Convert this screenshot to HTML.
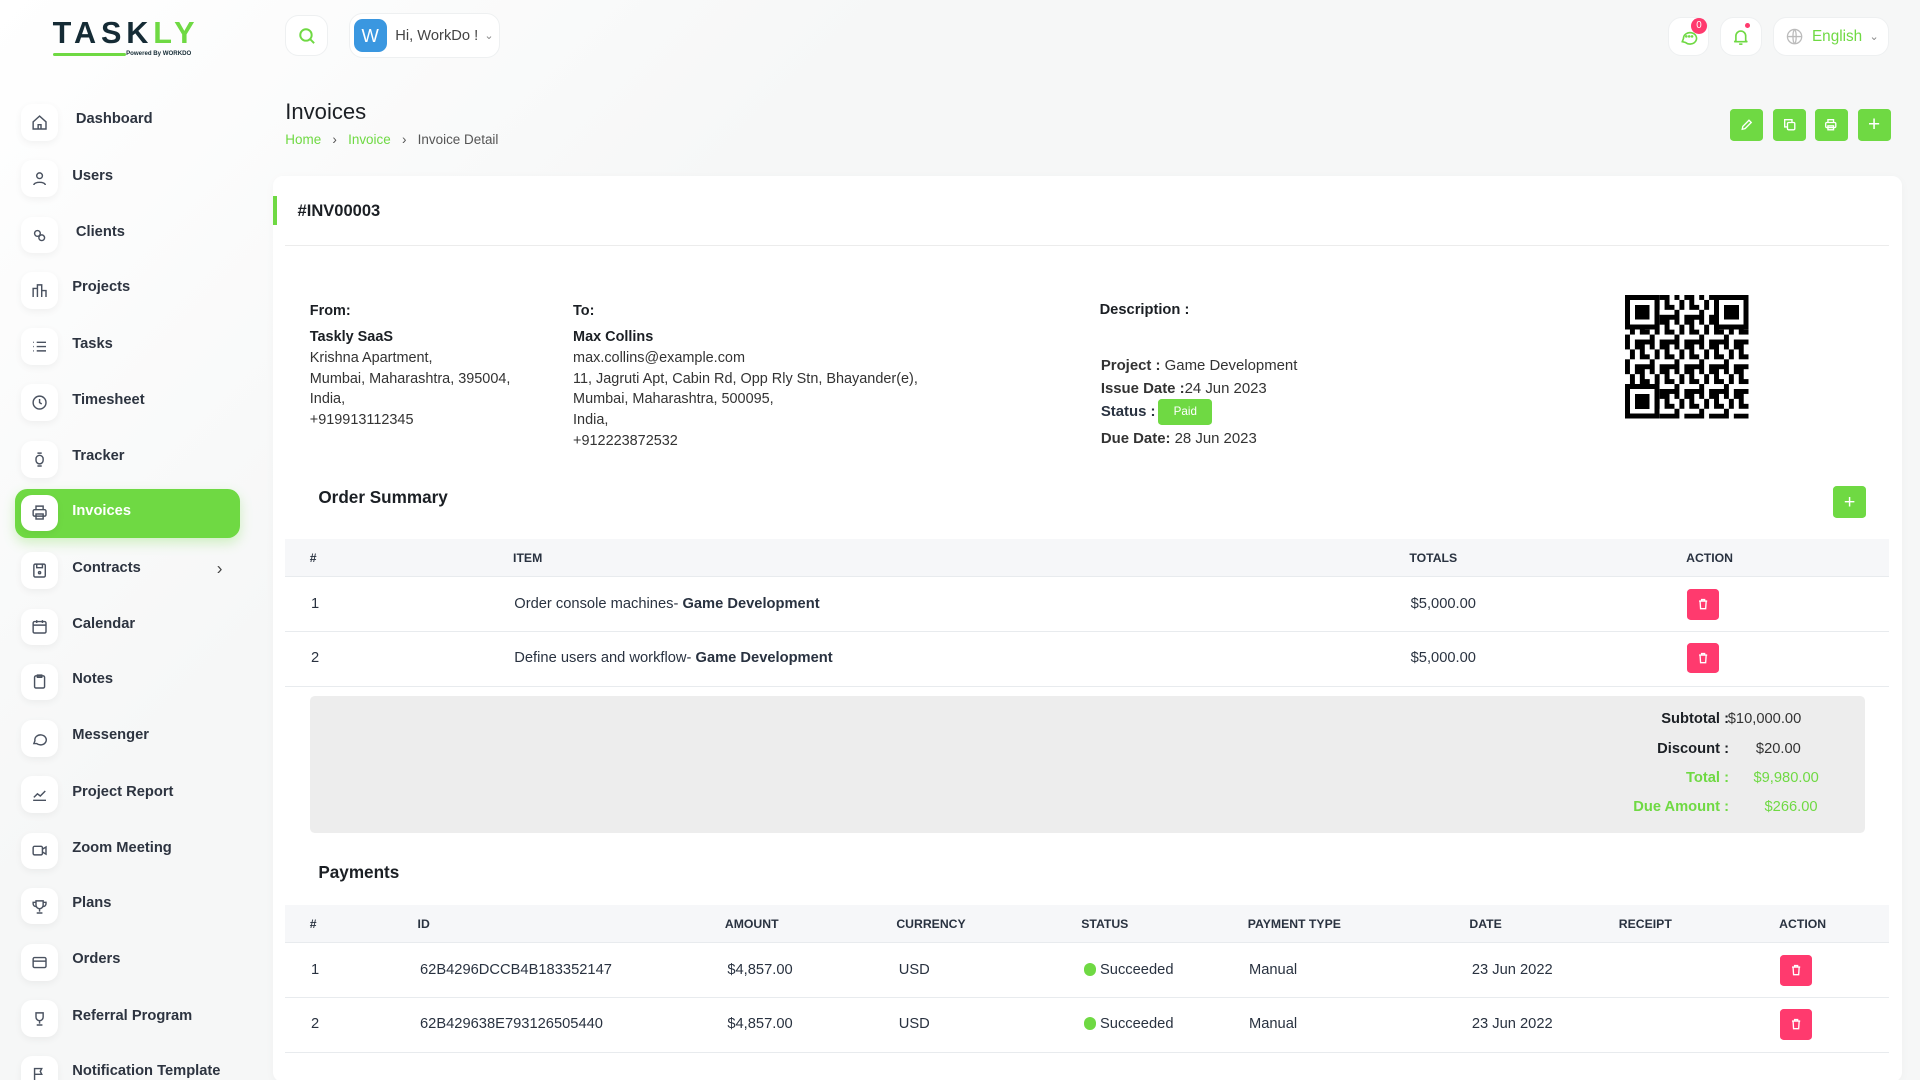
<!DOCTYPE html>
<html><head><meta charset="utf-8">
<style>
*{box-sizing:border-box;margin:0;padding:0}
html,body{width:1920px;height:1080px;overflow:hidden;background:#f7f8f8}
#w{zoom:1.22449;width:1568px;height:882px;position:relative;font-family:"Liberation Sans",sans-serif;color:#293240;font-size:12px;background:linear-gradient(135deg,#fff 0%,#f6f7f7 30%,#f6f7f7 100%)}
.a{position:absolute;white-space:nowrap}
.ib{position:absolute;left:17px;width:30px;height:30px;background:#fff;border-radius:9px;box-shadow:0 2px 6px rgba(0,0,0,.05);display:flex;align-items:center;justify-content:center}
.nt{position:absolute;left:59px;font-size:12px;font-weight:bold;color:#2d3440;white-space:nowrap}
.hb{position:absolute;background:#fff;border-radius:11px;border:1px solid #eef0f1;display:flex;align-items:center;justify-content:center;white-space:nowrap}
.gb{position:absolute;width:27px;height:26px;background:#6fd943;border-radius:3px;display:flex;align-items:center;justify-content:center}
.th{position:absolute;font-size:10px;font-weight:bold;color:#293240}
.rb{position:absolute;width:26px;height:25px;background:#ff3a6e;border-radius:3px;display:flex;align-items:center;justify-content:center}
.row{position:absolute;left:233px;width:1310px;border-bottom:1px solid #e8ebee}
.ib svg{width:14px;height:14px}
</style></head><body><div id="w">
<div class="a" style="left:43px;top:13px;font-size:25px;font-weight:900;letter-spacing:4px;color:#152b35">TASK<span style="color:#6fd943">LY</span></div>
<div class="a" style="left:43px;top:43px;width:60px;height:3px;background:#6fd943;border-radius:2px"></div>
<div class="a" style="left:103px;top:41px;font-size:5px;font-weight:bold;color:#152b35">Powered By WORKDO</div>

<div class="hb" style="left:233px;top:12px;width:35px;height:34px"><svg width="16" height="16" viewBox="0 0 24 24" fill="none" stroke="#6fd943" stroke-width="2.4"><circle cx="11" cy="11" r="7"/><path d="M16 16l5 5"/></svg></div>
<div class="hb" style="left:285px;top:11px;width:123px;height:36px;justify-content:flex-start;padding-left:3px"><div style="width:27px;height:27px;background:#3a97e0;border-radius:7px;color:#fff;font-size:15px;display:flex;align-items:center;justify-content:center">W</div><span style="margin-left:7px;font-size:12px;color:#444">Hi, WorkDo !</span><span style="margin-left:5px;color:#888;font-size:9px">&#8964;</span></div>
<div class="hb" style="left:1362px;top:14px;width:34px;height:32px"><svg width="16" height="16" viewBox="0 0 24 24" fill="none" stroke="#6fd943" stroke-width="2"><path d="M4 18l1.5-4A8 7 0 1 1 8 19z"/><circle cx="9" cy="11.5" r=".6" fill="#6fd943"/><circle cx="12.5" cy="11.5" r=".6" fill="#6fd943"/><circle cx="16" cy="11.5" r=".6" fill="#6fd943"/></svg></div>
<div class="a" style="left:1381px;top:15px;width:13px;height:13px;border-radius:50%;background:#ff3a6e;color:#fff;font-size:8px;text-align:center;line-height:13px">0</div>
<div class="hb" style="left:1405px;top:14px;width:34px;height:32px"><svg width="16" height="16" viewBox="0 0 24 24" fill="none" stroke="#6fd943" stroke-width="2"><path d="M6 17V11a6 6 0 0 1 12 0v6l2 1H4z"/><path d="M10 21h4"/></svg></div>
<div class="a" style="left:1425px;top:19px;width:4px;height:4px;border-radius:50%;background:#ff3a6e"></div>
<div class="hb" style="left:1448px;top:14px;width:95px;height:32px;justify-content:flex-start;padding-left:10px"><svg width="14" height="14" viewBox="0 0 24 24" fill="none" stroke="#bbb" stroke-width="1.8"><circle cx="12" cy="12" r="10"/><path d="M2 12h20M12 2c3 3 3 17 0 20M12 2c-3 3-3 17 0 20"/></svg><span style="margin-left:7px;color:#6fd943;font-size:12.5px">English</span><span style="margin-left:6px;color:#888;font-size:9px">&#8964;</span></div>

<div class="a" style="left:12px;top:399px;width:184px;height:40px;background:#6fd943;border-radius:10px;box-shadow:0 4px 10px rgba(111,217,67,.3)"></div>
<div class="ib" style="top:85px"><svg viewBox="0 0 24 24" fill="none" stroke="#4a5260" stroke-width="2"><path d="M3 11l9-8 9 8v10H3z"/><path d="M10 21v-6h4v6"/></svg></div><div class="nt" style="left:62px;top:91px">Dashboard</div>
<div class="ib" style="top:131px"><svg viewBox="0 0 24 24" fill="none" stroke="#4a5260" stroke-width="2"><circle cx="12" cy="8" r="4"/><path d="M4 21c0-5 16-5 16 0"/></svg></div><div class="nt" style="top:137px">Users</div>
<div class="ib" style="top:177px"><svg viewBox="0 0 24 24" fill="none" stroke="#4a5260" stroke-width="2"><circle cx="9" cy="9" r="4"/><circle cx="15" cy="15" r="4"/></svg></div><div class="nt" style="left:62px;top:183px">Clients</div>
<div class="ib" style="top:222px"><svg viewBox="0 0 24 24" fill="none" stroke="#4a5260" stroke-width="2"><path d="M3 21V9h6v12M9 21V4h6v17M15 21V12h6v9"/></svg></div><div class="nt" style="top:228px">Projects</div>
<div class="ib" style="top:268px"><svg viewBox="0 0 24 24" fill="none" stroke="#4a5260" stroke-width="2"><path d="M8 6h13M8 12h13M8 18h13M3 6h1M3 12h1M3 18h1"/></svg></div><div class="nt" style="top:274px">Tasks</div>
<div class="ib" style="top:314px"><svg viewBox="0 0 24 24" fill="none" stroke="#4a5260" stroke-width="2"><circle cx="12" cy="12" r="9"/><path d="M12 7v5l3 2"/></svg></div><div class="nt" style="top:320px">Timesheet</div>
<div class="ib" style="top:360px"><svg viewBox="0 0 24 24" fill="none" stroke="#4a5260" stroke-width="2"><rect x="7" y="6" width="10" height="12" rx="5"/><path d="M9 3h6M9 21h6"/></svg></div><div class="nt" style="top:366px">Tracker</div>
<div class="ib" style="top:404px"><svg viewBox="0 0 24 24" fill="none" stroke="#4a5260" stroke-width="2"><path d="M7 8V3h10v5"/><rect x="3" y="8" width="18" height="9" rx="2"/><rect x="7" y="14" width="10" height="7"/></svg></div><div class="nt" style="top:411px;color:#fff">Invoices</div>
<div class="ib" style="top:451px"><svg viewBox="0 0 24 24" fill="none" stroke="#4a5260" stroke-width="2"><rect x="4" y="3" width="16" height="18" rx="2"/><path d="M8 3v5h8V3"/><circle cx="12" cy="15" r="1.5"/></svg></div><div class="nt" style="top:457px">Contracts</div><div class="a" style="left:177px;top:456px;font-size:14px;color:#444">&#8250;</div>
<div class="ib" style="top:497px"><svg viewBox="0 0 24 24" fill="none" stroke="#4a5260" stroke-width="2"><rect x="3" y="5" width="18" height="16" rx="2"/><path d="M3 10h18M8 3v4M16 3v4"/></svg></div><div class="nt" style="top:503px">Calendar</div>
<div class="ib" style="top:542px"><svg viewBox="0 0 24 24" fill="none" stroke="#4a5260" stroke-width="2"><rect x="5" y="4" width="14" height="17" rx="2"/><path d="M9 3h6v3H9z"/></svg></div><div class="nt" style="top:548px">Notes</div>
<div class="ib" style="top:588px"><svg viewBox="0 0 24 24" fill="none" stroke="#4a5260" stroke-width="2"><path d="M4 19l1.5-4A8 7 0 1 1 8 19z"/></svg></div><div class="nt" style="top:594px">Messenger</div>
<div class="ib" style="top:634px"><svg viewBox="0 0 24 24" fill="none" stroke="#4a5260" stroke-width="2"><path d="M3 20h18M4 16l5-5 4 3 7-7"/></svg></div><div class="nt" style="top:640px">Project Report</div>
<div class="ib" style="top:680px"><svg viewBox="0 0 24 24" fill="none" stroke="#4a5260" stroke-width="2"><rect x="3" y="6" width="13" height="12" rx="2"/><path d="M16 10l5-3v10l-5-3"/></svg></div><div class="nt" style="top:686px">Zoom Meeting</div>
<div class="ib" style="top:725px"><svg viewBox="0 0 24 24" fill="none" stroke="#4a5260" stroke-width="2"><path d="M7 4h10v6a5 5 0 0 1-10 0zM12 15v4M8 21h8M7 6H3v2a4 4 0 0 0 4 4M17 6h4v2a4 4 0 0 1-4 4"/></svg></div><div class="nt" style="top:731px">Plans</div>
<div class="ib" style="top:771px"><svg viewBox="0 0 24 24" fill="none" stroke="#4a5260" stroke-width="2"><rect x="3" y="5" width="18" height="14" rx="2"/><path d="M3 10h18"/></svg></div><div class="nt" style="top:777px">Orders</div>
<div class="ib" style="top:817px"><svg viewBox="0 0 24 24" fill="none" stroke="#4a5260" stroke-width="2"><path d="M7 4h10v6a5 5 0 0 1-10 0zM12 15v4M8 21h8"/></svg></div><div class="nt" style="top:823px">Referral Program</div>
<div class="ib" style="top:862px"><svg viewBox="0 0 24 24" fill="none" stroke="#4a5260" stroke-width="2"><path d="M5 21V5h10l-2 4 2 4H5"/></svg></div><div class="nt" style="top:868px">Notification Template</div>

<div class="a" style="left:233px;top:81px;font-size:18px;color:#1b1f24">Invoices</div>
<div class="a" style="left:233px;top:108px;font-size:11px;color:#555"><span style="color:#6fd943">Home</span>&nbsp;&nbsp;&nbsp;›&nbsp;&nbsp;&nbsp;<span style="color:#6fd943">Invoice</span>&nbsp;&nbsp;&nbsp;›&nbsp;&nbsp;&nbsp;Invoice Detail</div>
<div class="gb" style="left:1413px;top:89px"><svg width="11" height="11" viewBox="0 0 24 24" fill="none" stroke="#fff" stroke-width="2.4"><path d="M4 20l1-5L16 4l4 4L9 19z"/></svg></div>
<div class="gb" style="left:1448px;top:89px"><svg width="11" height="11" viewBox="0 0 24 24" fill="none" stroke="#fff" stroke-width="2.4"><rect x="8" y="8" width="13" height="13" rx="2"/><path d="M16 8V3H3v13h5"/></svg></div>
<div class="gb" style="left:1482px;top:89px"><svg width="11" height="11" viewBox="0 0 24 24" fill="none" stroke="#fff" stroke-width="2.4"><path d="M7 8V3h10v5"/><rect x="3" y="8" width="18" height="9" rx="2"/><rect x="7" y="14" width="10" height="7"/></svg></div>
<div class="gb" style="left:1517px;top:89px;color:#fff;font-size:17px">+</div>

<div class="a" style="left:223px;top:144px;width:1330px;height:740px;background:#fff;border-radius:8px;box-shadow:0 2px 8px rgba(0,0,0,.03)"></div>
<div class="a" style="left:223px;top:160px;width:3px;height:24px;background:#6fd943"></div>
<div class="a" style="left:243px;top:164px;font-size:13.5px;font-weight:bold;color:#1b1f24">#INV00003</div>
<div class="a" style="left:233px;top:200px;width:1310px;height:1px;background:#ececec"></div>

<div class="a" style="left:253px;top:246px;line-height:17px;font-size:11.8px;color:#333"><b style="color:#1b1f24">From:</b><br><div style="height:4px"></div><b style="color:#1b1f24">Taskly SaaS</b><br>Krishna Apartment,<br>Mumbai, Maharashtra, 395004,<br>India,<br>+919913112345</div>
<div class="a" style="left:468px;top:246px;line-height:17px;font-size:11.8px;color:#333"><b style="color:#1b1f24">To:</b><br><div style="height:4px"></div><b style="color:#1b1f24">Max Collins</b><br>max.collins@example.com<br>11, Jagruti Apt, Cabin Rd, Opp Rly Stn, Bhayander(e),<br>Mumbai, Maharashtra, 500095,<br>India,<br>+912223872532</div>
<div class="a" style="left:898px;top:247px;font-size:12px;font-weight:bold;color:#1b1f24">Description :</div>
<div class="a" style="left:899px;top:289px;font-size:12.2px;color:#333;line-height:19px"><b>Project :</b> Game Development<br><b>Issue Date :</b>24 Jun 2023</div>
<div class="a" style="left:899px;top:329px;font-size:12.2px;font-weight:bold">Status :</div>
<div class="a" style="left:946px;top:326px;width:44px;height:21px;background:#6fd943;border-radius:3px;color:#fff;font-size:9.5px;text-align:center;line-height:21px">Paid</div>
<div class="a" style="left:899px;top:351px;font-size:12.2px;color:#333"><b>Due Date:</b> 28 Jun 2023</div>
<svg class="a" style="left:1327px;top:241px" width="101" height="101" viewBox="0 0 25 25" shape-rendering="crispEdges">
<rect width="25" height="25" fill="#fff"/>
<pattern id="q" width="5" height="5" patternUnits="userSpaceOnUse"><rect x="0" y="0" width="1" height="1"/><rect x="2" y="0" width="2" height="1"/><rect x="1" y="1" width="1" height="2"/><rect x="3" y="2" width="2" height="1"/><rect x="0" y="3" width="1" height="2"/><rect x="2" y="4" width="2" height="1"/><rect x="4" y="4" width="1" height="1"/><rect x="3" y="1" width="1" height="1"/></pattern>
<rect width="25" height="25" fill="url(#q)"/>
<g><rect x="0" y="0" width="7" height="7" fill="#fff"/><rect x=".5" y=".5" width="6" height="6" fill="none" stroke="#000"/><rect x="2" y="2" width="3" height="3"/>
<rect x="18" y="0" width="7" height="7" fill="#fff"/><rect x="18.5" y=".5" width="6" height="6" fill="none" stroke="#000"/><rect x="20" y="2" width="3" height="3"/>
<rect x="0" y="18" width="7" height="7" fill="#fff"/><rect x=".5" y="18.5" width="6" height="6" fill="none" stroke="#000"/><rect x="2" y="20" width="3" height="3"/></g></svg>

<div class="a" style="left:260px;top:398px;font-size:14px;font-weight:bold;color:#1b1f24">Order Summary</div>
<div class="gb" style="left:1497px;top:397px;color:#fff;font-size:16px">+</div>
<div class="row" style="top:440px;height:31px;background:#f6f7f9"></div>
<div class="th" style="left:253px;top:450px">#</div><div class="th" style="left:419px;top:450px">ITEM</div><div class="th" style="left:1151px;top:450px">TOTALS</div><div class="th" style="left:1377px;top:450px">ACTION</div>
<div class="row" style="top:471px;height:45px"></div>
<div class="row" style="top:516px;height:45px"></div>
<div class="a" style="left:254px;top:487px;font-size:12px">1</div><div class="a" style="left:420px;top:487px;font-size:12px">Order console machines- <b>Game Development</b></div><div class="a" style="left:1152px;top:487px;font-size:12px">$5,000.00</div>
<div class="a" style="left:254px;top:531px;font-size:12px">2</div><div class="a" style="left:420px;top:531px;font-size:12px">Define users and workflow- <b>Game Development</b></div><div class="a" style="left:1152px;top:531px;font-size:12px">$5,000.00</div>
<div class="rb" style="left:1378px;top:481px"><svg width="10" height="10" viewBox="0 0 24 24" fill="none" stroke="#fff" stroke-width="2.6"><path d="M4 6h16M9 6V3h6v3M6 6l1 15h10l1-15"/></svg></div>
<div class="rb" style="left:1378px;top:525px"><svg width="10" height="10" viewBox="0 0 24 24" fill="none" stroke="#fff" stroke-width="2.6"><path d="M4 6h16M9 6V3h6v3M6 6l1 15h10l1-15"/></svg></div>

<div class="a" style="left:253px;top:568px;width:1270px;height:112px;background:#ededed;border-radius:4px"></div>
<div class="a" style="left:1300px;top:576px;width:112px;text-align:right;font-size:12px;font-weight:bold;line-height:24px;color:#1b1f24">Subtotal :<br>Discount :<br><span style="color:#6fd943">Total :</span><br><span style="color:#6fd943">Due Amount :</span></div>
<div class="a" style="left:1411px;top:576px;font-size:12px;line-height:24px;color:#333">$10,000.00<br><span style="padding-left:23px">$20.00</span><br><span style="padding-left:21px;color:#6fd943">$9,980.00</span><br><span style="padding-left:30px;color:#6fd943">$266.00</span></div>

<div class="a" style="left:260px;top:704px;font-size:14px;font-weight:bold;color:#1b1f24">Payments</div>
<div class="row" style="top:739px;height:31px;background:#f6f7f9"></div>
<div class="th" style="left:253px;top:749px">#</div><div class="th" style="left:341px;top:749px">ID</div><div class="th" style="left:592px;top:749px">AMOUNT</div><div class="th" style="left:732px;top:749px">CURRENCY</div><div class="th" style="left:883px;top:749px">STATUS</div><div class="th" style="left:1019px;top:749px">PAYMENT TYPE</div><div class="th" style="left:1200px;top:749px">DATE</div><div class="th" style="left:1322px;top:749px">RECEIPT</div><div class="th" style="left:1453px;top:749px">ACTION</div>
<div class="row" style="top:770px;height:45px"></div>
<div class="row" style="top:815px;height:45px"></div>
<div class="a" style="left:254px;top:786px;font-size:12px">1</div><div class="a" style="left:343px;top:786px;font-size:12px">62B4296DCCB4B183352147</div><div class="a" style="left:594px;top:786px;font-size:12px">$4,857.00</div><div class="a" style="left:734px;top:786px;font-size:12px">USD</div><div class="a" style="left:885px;top:786px;font-size:12px"><span style="display:inline-block;width:10px;height:10px;border-radius:50%;background:#6fd943;vertical-align:-1px"></span> Succeeded</div><div class="a" style="left:1020px;top:786px;font-size:12px">Manual</div><div class="a" style="left:1202px;top:786px;font-size:12px">23 Jun 2022</div>
<div class="a" style="left:254px;top:830px;font-size:12px">2</div><div class="a" style="left:343px;top:830px;font-size:12px">62B429638E793126505440</div><div class="a" style="left:594px;top:830px;font-size:12px">$4,857.00</div><div class="a" style="left:734px;top:830px;font-size:12px">USD</div><div class="a" style="left:885px;top:830px;font-size:12px"><span style="display:inline-block;width:10px;height:10px;border-radius:50%;background:#6fd943;vertical-align:-1px"></span> Succeeded</div><div class="a" style="left:1020px;top:830px;font-size:12px">Manual</div><div class="a" style="left:1202px;top:830px;font-size:12px">23 Jun 2022</div>
<div class="rb" style="left:1454px;top:780px"><svg width="10" height="10" viewBox="0 0 24 24" fill="none" stroke="#fff" stroke-width="2.6"><path d="M4 6h16M9 6V3h6v3M6 6l1 15h10l1-15"/></svg></div>
<div class="rb" style="left:1454px;top:824px"><svg width="10" height="10" viewBox="0 0 24 24" fill="none" stroke="#fff" stroke-width="2.6"><path d="M4 6h16M9 6V3h6v3M6 6l1 15h10l1-15"/></svg></div>
</div></body></html>
